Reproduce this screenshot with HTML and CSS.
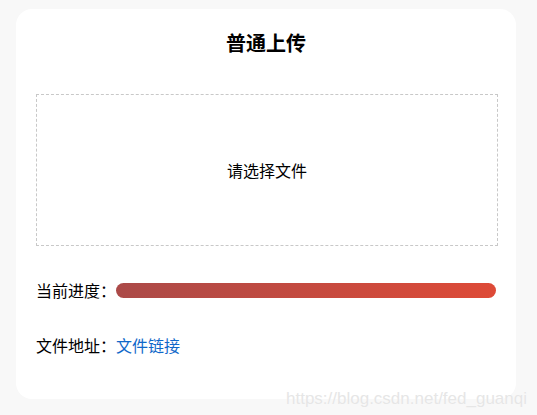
FILE: index.html
```html
<!DOCTYPE html>
<html lang="zh-CN">
<head>
    <meta charset="utf-8">
    <title>普通上传</title>
    <link rel="stylesheet" href="styles.css">
</head>
<body>
    <div class="card">
        <h3 class="title">普通上传</h3>
        <div class="drop">请选择文件</div>
        <div class="row">
            <span class="label">当前进度：</span>
            <div class="bar"><div class="bar-fill" style="width: 100%"></div></div>
        </div>
        <div class="row">
            <span class="label">文件地址：</span>
            <a class="link" href="#">文件链接</a>
        </div>
    </div>
    <div class="mark">https://blog.csdn.net/fed_guanqi</div>
</body>
</html>
```

FILE: styles.css
```css
body {
    margin: 0;
    padding: 9px 0 0 16px;
    background: #f8f8f8;
    font-family: "Noto Sans CJK SC", "Noto Sans", sans-serif;
    font-size: 16px;
    color: #000;
}
.card {
    box-sizing: border-box;
    width: 500px;
    height: 390px;
    padding: 20px;
    background: #fff;
    border-radius: 16px;
}
.title {
    margin: 0 0 37px;
    font-size: 20px;
    line-height: 28px;
    font-weight: bold;
    text-align: center;
}
.drop {
    height: 150px;
    margin-right: -2px;
    border: 1px dashed #c8c8c8;
    display: flex;
    align-items: center;
    justify-content: center;
}
.row {
    display: flex;
    align-items: center;
    height: 24px;
    margin-top: 32px;
}
.row + .row {
    margin-top: 31px;
}
.label {
    width: 80px;
    flex: none;
}
.bar {
    flex: 1;
    height: 15px;
    border-radius: 8px;
    overflow: hidden;
}
.bar-fill {
    height: 100%;
    background: linear-gradient(100deg, #ab4a48, #de4a37);
}
.link {
    color: #1068c9;
    text-decoration: none;
}
.mark {
    position: absolute;
    right: 10px;
    top: 389px;
    font-family: "Liberation Sans", Arial, sans-serif;
    font-size: 17px;
    color: #e6e6e6;
    text-shadow: 0 0 1px #fff;
}
```
